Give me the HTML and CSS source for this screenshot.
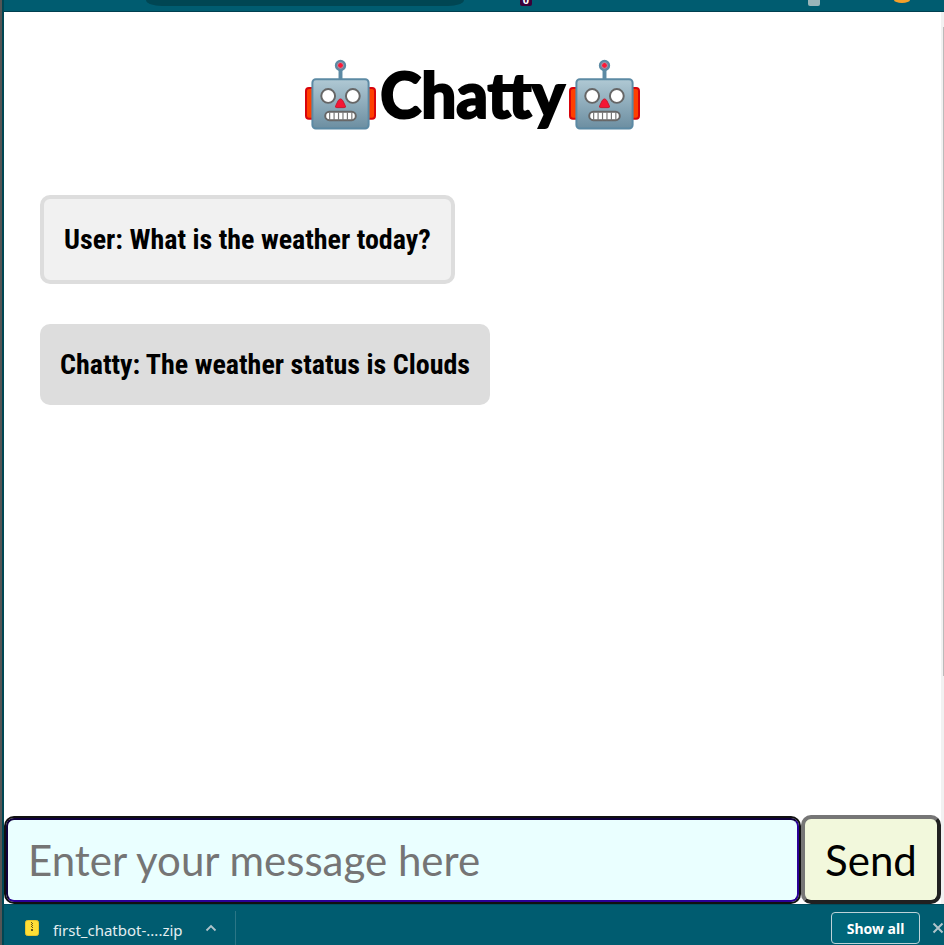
FILE: index.html
```html
<!DOCTYPE html>
<html lang="en">
<head>
<meta charset="utf-8">
<title>Chatty</title>
<link rel="stylesheet" href="styles.css">
</head>
<body>
<svg class="defs" aria-hidden="true">
  <defs>
    <linearGradient id="face" x1="0" y1="0" x2="0" y2="1">
      <stop offset="0" stop-color="#b0c9d4"/>
      <stop offset="1" stop-color="#6c8ea1"/>
    </linearGradient>
    <symbol id="robot" viewBox="0 0 72 72">
      <rect x="1" y="29.500" width="10" height="31" rx="3" fill="#ff4000" stroke="#d8040c" stroke-width="2"/>
      <rect x="61" y="29.500" width="10" height="31" rx="3" fill="#ff4000" stroke="#d8040c" stroke-width="2"/>
      <path d="M36 10v11" stroke="#5c8aa4" stroke-width="4"/>
      <circle cx="36" cy="6.500" r="4.500" fill="#ff1837" stroke="#5c8aa4" stroke-width="2.500"/>
      <circle cx="36" cy="6.500" r="3" fill="none" stroke="#8db0c0" stroke-width="1"/>
      <rect x="7.500" y="20.500" width="57" height="50" rx="3.500" fill="url(#face)" stroke="#5c8aa4" stroke-width="2"/>
      <circle cx="23.500" cy="37.500" r="7" fill="#fff" stroke="#666" stroke-width="2"/>
      <circle cx="48.500" cy="37.500" r="7" fill="#fff" stroke="#666" stroke-width="2"/>
      <path d="M36 40.500q1.500 0 2.500 2l2.300 4.800q1 2-1 2h-7.600q-2 0-1-2l2.300-4.800q1-2 2.500-2z" fill="#f51635" stroke="#c7162c"/>
      <rect x="20.500" y="53.500" width="31" height="8.500" rx="4.200" fill="#fff" stroke="#666" stroke-width="2"/>
      <path d="M25 54v8M29.500 54v8M34 54v8M38.500 54v8M43 54v8M47.500 54v8" stroke="#777" stroke-width="1.200"/>
    </symbol>
  </defs>
</svg>
<header class="toolbar">
  <span class="address"></span>
  <span class="badge">0</span>
  <span class="extension"></span>
  <span class="avatar"></span>
</header>
<main class="page">
  <h1 class="title">
    <svg class="robot" aria-hidden="true"><use href="#robot"/></svg>
    <span>Chatty</span>
    <svg class="robot" aria-hidden="true"><use href="#robot"/></svg>
  </h1>
  <section class="messages">
    <p class="message user">User: What is the weather today?</p>
    <p class="message bot">Chatty: The weather status is Clouds</p>
  </section>
  <form class="composer">
    <input class="entry" type="text" placeholder="Enter your message here" aria-label="Message">
    <button class="send" type="button">Send</button>
  </form>
  <div class="scrollbar"><div class="thumb"></div></div>
</main>
<footer class="downloads">
  <svg class="zip" viewBox="0 0 14 16" aria-hidden="true">
    <rect x="0.500" y="0.500" width="13" height="15" rx="2" fill="#ffdf36" stroke="#e8c52c"/>
    <path d="M6 2.500h1M7 3.500h1M6 4.500h1M7 5.500h1M6 6.500h1M7 7.500h1M6 9.500h2M6 10.500h2" stroke="#66551c"/>
  </svg>
  <span class="filename">first_chatbot-....zip</span>
  <button class="icon-button expand" type="button" aria-label="Open menu">
    <svg width="12" height="8" viewBox="0 0 12 8"><path d="M1.500 6.500 6 2l4.500 4.500" fill="none" stroke="#b0c4ca" stroke-width="1.800"/></svg>
  </button>
  <button class="show-all" type="button">Show all</button>
  <button class="icon-button close" type="button" aria-label="Close">
    <svg width="12" height="12" viewBox="0 0 12 12"><path d="m1.500 1.500 9 9m0-9-9 9" fill="none" stroke="#b0c4ca" stroke-width="2"/></svg>
  </button>
</footer>
</body>
</html>
```

FILE: styles.css
```css
* { box-sizing: border-box; }

body {
  margin: 0;
  min-height: 100vh;
  display: grid;
  grid-template-rows: 12px 1fr 41px;
  background: #fff;
  border-left: 2px solid #555;
  font-family: "Noto Sans", sans-serif;
}

.defs { position: absolute; width: 0; height: 0; }

.toolbar {
  display: flex;
  align-items: flex-start;
  overflow: hidden;
  padding-right: 34px;
  background: #005c70;
  border-bottom: 1px solid #004050;
  border-left: 2px solid #004653;
}

.address {
  flex: 0 1 318px;
  height: 6px;
  margin-left: 142px;
  background: #004653;
  border-radius: 0 0 16px 16px / 0 0 6px 6px;
}

.badge {
  width: 12px;
  height: 6px;
  margin-left: 56px;
  overflow: hidden;
  background: #3b0038;
  border-radius: 0 0 2px 2px;
  color: #fff;
  font-size: 11px;
  font-weight: 700;
  line-height: 0;
  text-align: center;
}

.extension {
  width: 12px;
  height: 6px;
  margin-left: auto;
  background: #9ab4b9;
  border-radius: 0 0 2px 2px;
}

.avatar {
  width: 16px;
  height: 3px;
  margin-left: 74px;
  background: #f5a02a;
  border-radius: 0 0 8px 8px / 0 0 3px 3px;
}

.page {
  position: relative;
  display: flex;
  flex-direction: column;
  padding-right: 3px;
  border-left: 2px solid #004653;
}

.title {
  display: flex;
  justify-content: center;
  align-items: center;
  gap: 4px;
  margin: 47px 0 0;
  height: 71px;
  font: 900 62px/71px Lato, sans-serif;
  -webkit-text-stroke: 2px #000;
}

.robot { flex: none; width: 71px; height: 71px; }

.messages {
  flex: 1;
  display: flex;
  flex-direction: column;
  align-items: flex-start;
  gap: 40px;
  padding: 65px 36px 40px;
}

.message {
  margin: 0;
  padding: 20px;
  border-radius: 10px;
  color: #000;
  font: 700 28px/41px "Roboto Condensed", "Liberation Sans Narrow", "Liberation Sans", sans-serif;
}

.user { background: #f1f1f1; border: 4px solid #ddd; }
.bot { background: #ddd; }

.composer { display: flex; align-items: stretch; height: 89px; }

.entry {
  flex: 1;
  min-width: 0;
  margin: 3px 2px 2px;
  padding: 0 20px;
  border: 2px solid;
  border-color: #0e003c #2a0096 #2a0096 #0e003c;
  border-radius: 8px;
  outline: 2px solid #101010;
  background: #eaffff;
  font: 400 42px Lato, sans-serif;
}

.entry::placeholder { color: #757575; opacity: 1; }

.send {
  width: 140px;
  padding: 0;
  border: 4px solid;
  border-color: #767676 #212121 #212121 #767676;
  border-radius: 10px;
  background: #f2f8dc;
  color: #000;
  font: 400 42px Lato, sans-serif;
}

.scrollbar {
  position: absolute;
  top: 0;
  right: 0;
  bottom: 0;
  width: 3px;
  padding-top: 15px;
  background: #f1f1f1;
}

.thumb { width: 1px; height: 74%; margin-left: auto; background: #bbb; }

.downloads {
  display: flex;
  align-items: center;
  padding: 6px 0 0 21px;
  background: #005c70;
  border-top: 1px solid #004d5e;
  border-left: 2px solid #004653;
  color: #e4eef0;
}

.zip { width: 14px; height: 16px; }

.filename { margin: 4px 0 0 14px; font-size: 15px; line-height: 20px; }

.icon-button {
  display: flex;
  padding: 0;
  border: 0;
  background: none;
}

.expand {
  align-items: center;
  align-self: stretch;
  margin-left: 22px;
  padding-right: 18px;
  border-right: 1px solid #2b7686;
}

.show-all {
  width: 89px;
  height: 32px;
  margin-left: auto;
  padding: 0;
  border: 1px solid #bdd3d8;
  border-radius: 4px;
  background: #00677b;
  color: #fff;
  font: 700 14px "Noto Sans", sans-serif;
}

.close { margin-left: 12px; }
```
